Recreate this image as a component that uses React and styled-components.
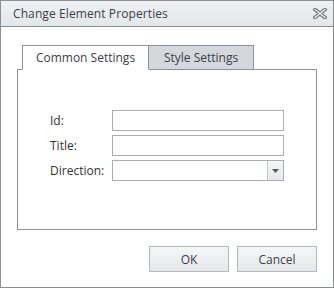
import styled, { createGlobalStyle } from "styled-components"

const Global = createGlobalStyle`
  body {
    margin: 0;
    background: #ffffff;
    font-family: "Open Sans", "Liberation Sans", sans-serif;
  }
  * { box-sizing: border-box; }
`

export default function App() {
  return (
    <>
      <Global />
      <Dialog>
        <TitleBar>
          <Title>Change Element Properties</Title>
          <CloseIcon width="14" height="11" viewBox="0 0 14 11">
            <path d="M2 1.5 L12 9.5 M12 1.5 L2 9.5" stroke="#6d7177" strokeWidth="3.6" strokeLinecap="square" />
            <path d="M2 1.5 L12 9.5 M12 1.5 L2 9.5" stroke="#f4f5f6" strokeWidth="1.4" strokeLinecap="square" />
          </CloseIcon>
        </TitleBar>

        <Body>
          <TabRow>
            <Tab active width={127}>Common Settings</Tab>
            <Tab width={106}>Style Settings</Tab>
          </TabRow>
          <Panel>
            <Form>
              <Label>Id:</Label>
              <Input />
              <Label>Title:</Label>
              <Input />
              <Label>Direction:</Label>
              <Select>
                <SelectArrow>
                  <svg width="7" height="4" viewBox="0 0 7 4">
                    <path d="M0 0 H7 L3.5 4 Z" fill="#55595e" />
                  </svg>
                </SelectArrow>
              </Select>
            </Form>
          </Panel>
          <Footer>
            <Button>OK</Button>
            <Button>Cancel</Button>
          </Footer>
        </Body>
      </Dialog>
    </>
  )
}

const Dialog = styled.div`
  width: 334px;
  height: 288px;
  border: 1px solid #8b8e93;
  display: flex;
  flex-direction: column;
  background: #ffffff;
`

const TitleBar = styled.div`
  height: 26px;
  border-bottom: 1px solid #8b8e93;
  background: linear-gradient(#eef0f2, #e4e7ea);
  display: flex;
  align-items: center;
  justify-content: space-between;
  padding: 0 6px 1px 12px;
`

const Title = styled.span`
  font-size: 12px;
  letter-spacing: 0.1px;
  color: #3d3d4c;
`

const CloseIcon = styled.svg`
  display: block;
`

const Body = styled.div`
  padding: 18px 16px 0 16px;
  display: flex;
  flex-direction: column;
`

const TabRow = styled.div`
  display: flex;
  padding-left: 5px;
  margin-bottom: -1px;
`

const Tab = styled.div`
  width: ${p => p.width}px;
  height: 25px;
  border: 1px solid #8e9297;
  border-bottom-color: ${p => (p.active ? "#ffffff" : "#8e9297")};
  background: ${p => (p.active ? "#ffffff" : "#d4d7db")};
  margin-right: -1px;
  font-size: 12px;
  color: #3d3d4c;
  display: flex;
  align-items: center;
  justify-content: center;
  position: relative;
  z-index: ${p => (p.active ? 1 : 0)};
`

const Panel = styled.div`
  height: 161px;
  border: 1px solid #8e9297;
  padding: 40px 32px 0 32px;
`

const Form = styled.div`
  display: grid;
  grid-template-columns: 62px 1fr;
  row-gap: 4px;
  align-items: center;
`

const Label = styled.span`
  font-size: 12px;
  color: #333333;
`

const Input = styled.div`
  height: 21px;
  border: 1px solid #a9adb2;
  background: #ffffff;
`

const Select = styled(Input)`
  display: flex;
  justify-content: flex-end;
`

const SelectArrow = styled.div`
  width: 16px;
  border-left: 1px solid #c3c6ca;
  background: linear-gradient(#f6f7f8, #e6e8eb);
  display: flex;
  align-items: center;
  justify-content: center;
`

const Footer = styled.div`
  display: flex;
  justify-content: flex-end;
  gap: 8px;
  margin-top: 16px;
`

const Button = styled.div`
  width: 80px;
  height: 26px;
  border: 1px solid #b5b9be;
  background: linear-gradient(#f5f6f7, #e5e7ea);
  font-size: 12px;
  color: #3d3d4c;
  display: flex;
  align-items: center;
  justify-content: center;
`
